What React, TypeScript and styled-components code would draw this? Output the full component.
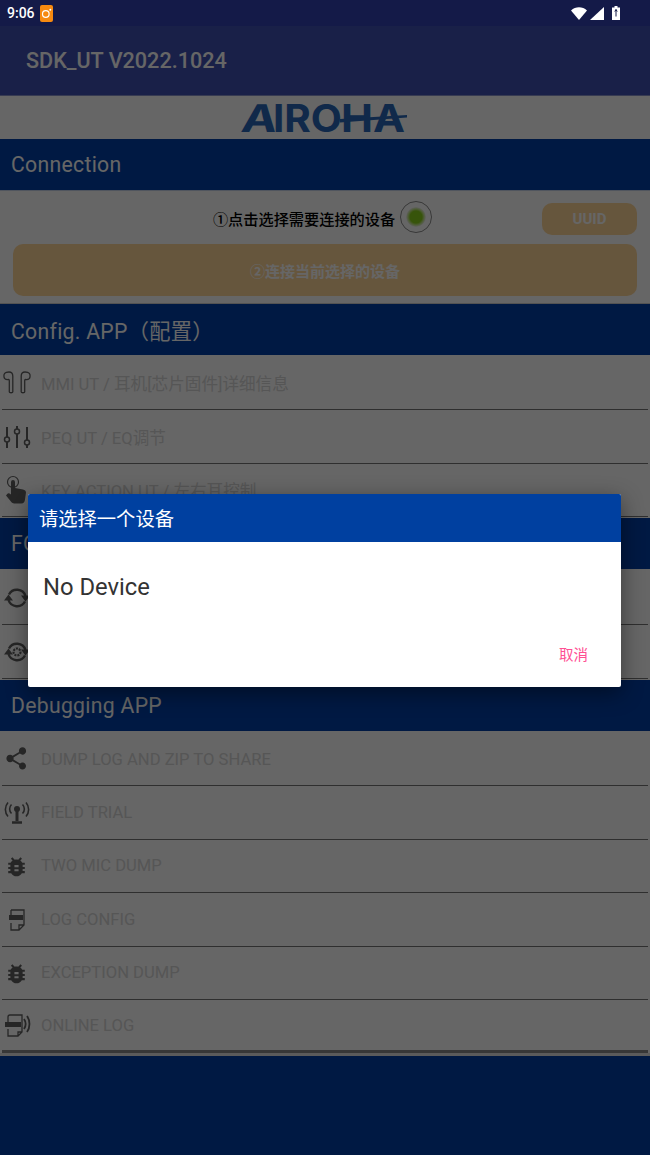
import React from "react"
import styled, { createGlobalStyle } from "styled-components"

const GlobalStyle = createGlobalStyle`
	html, body {
		margin: 0;
		padding: 0;
		background: #00194a;
	}

	* {
		box-sizing: border-box;
	}
`

const FONT = `Roboto, "Noto Sans CJK SC", sans-serif`

const Screen = styled.div`
	position: relative;
	width: 650px;
	height: 1155px;
	overflow: hidden;

	display: flex;
	flex-direction: column;

	background: #0040a8;
	font-family: ${FONT};
`

const StatusBar = styled.div`
	position: relative;
	z-index: 2;
	height: 26px;
	flex: none;

	display: flex;
	align-items: center;
	padding: 0 30px 0 7px;

	background: #141a48;
	color: #fff;
	font-size: 14px;
	font-weight: 500;
`

const StatusTime = styled.span`
	margin-right: 5px;
`

const NotificationBadge = styled.span`
	width: 13px;
	height: 17px;
	border-radius: 2px;
	background: #f68a10;

	display: flex;
	align-items: center;
	justify-content: center;
`

const StatusIcons = styled.div`
	margin-left: auto;
	display: flex;
	align-items: center;
	gap: 3px;
`

const BatteryIcon = styled.svg`
	margin-left: 5px;
`

const AppBar = styled.header`
	height: 70px;
	flex: none;

	display: flex;
	align-items: center;
	padding: 0 26px;

	background: #3f51b5;
	border-bottom: 1px solid #8a93cc;
	color: #fff;
	font-size: 21.6px;
	font-weight: 500;
`

const LogoBar = styled.div`
	height: 43px;
	flex: none;

	display: flex;
	align-items: center;
	justify-content: center;

	background: #fff;
`

const SectionTitle = styled.h2`
	height: 51px;
	flex: none;
	margin: 0;
	padding: 0 0 0 11px;

	display: flex;
	align-items: center;

	background: #0040a8;
	color: #fff;
	font-size: 21.2px;
	font-weight: 400;
	letter-spacing: 0.3px;
`

const ConnectionPanel = styled.section`
	height: 114px;
	flex: none;
	padding: 11px 13px 0;

	display: flex;
	flex-direction: column;
	gap: 10px;

	background: #fff;
	border-top: 1px solid #c8d4ec;
	border-bottom: 1px solid #d0d0d0;
`

const SelectRow = styled.div`
	height: 32px;

	display: grid;
	grid-template-columns: 1fr auto 1fr;
	align-items: center;
`

const SelectGroup = styled.div`
	grid-column: 2;

	display: flex;
	align-items: center;
	gap: 5px;
	margin: -1px 0 0 -5px;

	color: #000;
	font-size: 15.2px;
	font-weight: 500;
`

const Radio = styled.span`
	width: 32px;
	height: 32px;
	margin-bottom: 2px;
	border-radius: 50%;
	border: 1.5px solid #8c8c8c;

	display: flex;
	align-items: center;
	justify-content: center;
`

const RadioDot = styled.span`
	width: 20px;
	height: 20px;
	border-radius: 50%;
	background: radial-gradient(circle, #8bd21c 0 6px, #c4e68c 8px, #f4f4f4 10px);
`

const ActionButton = styled.button<{ $small?: boolean }>`
	display: block;
	border: 0;
	padding: 0;

	width: ${p => (p.$small ? "95px" : "100%")};
	height: ${p => (p.$small ? "32px" : "52px")};
	justify-self: end;

	border-radius: 10px;
	background: #ffd79a;
	color: #fff;
	font-family: ${FONT};
	font-size: 15px;
	font-weight: 700;
`

const RowList = styled.div<{ $height: number; $top?: number }>`
	height: ${p => p.$height}px;
	flex: none;
	padding: ${p => p.$top ?? 2}px 2px 0;
	background: #fff;
`

const Row = styled.div`
	height: 53.4px;

	display: flex;
	align-items: center;
	gap: 9px;

	border-bottom: 1px solid #777;
	color: #d6d6d6;
	font-size: 16.6px;
	font-weight: 400;
`

const LastRowList = styled(RowList)`
	border-bottom: 3px solid #e4e4e4;

	${Row}:last-child {
		border-bottom: 3px solid #8a8a8a;
	}
`

const RowIcon = styled.svg`
	width: 30px;
	height: 30px;
	flex: none;
	color: #606060;
`

const Scrim = styled.div`
	position: absolute;
	inset: 0;
	z-index: 1;
	padding-top: 26px;

	display: flex;
	align-items: center;
	justify-content: center;

	background: rgba(0, 0, 0, 0.6);
`

const Dialog = styled.div`
	width: 593px;
	height: 193px;
	margin-right: 1px;
	border-radius: 2px;
	overflow: hidden;

	display: flex;
	flex-direction: column;

	background: #fff;
	box-shadow: 0 6px 22px rgba(0, 0, 0, 0.45);
`

const DialogTitle = styled.div`
	height: 48px;
	flex: none;
	padding: 0 11px;

	display: flex;
	align-items: center;

	background: #0040a0;
	color: #fff;
	font-size: 19.3px;
`

const DialogBody = styled.div`
	flex: 1;
	padding: 31px 15px 0;
	color: #333;
	font-size: 23.8px;
`

const DialogFooter = styled.div`
	height: 68px;
	flex: none;
	padding: 0 33px 0 0;

	display: flex;
	justify-content: flex-end;
	align-items: center;
`

const CancelButton = styled.button`
	border: 0;
	padding: 0;
	background: none;
	color: #ff4f93;
	font-family: ${FONT};
	font-size: 14.5px;
`

const Logo = () => (
	<svg width="176" height="43" viewBox="0 0 176 43" aria-label="AIROHA">
		<g fill="#2a68b8" fontFamily="Inter, sans-serif" fontSize="38" fontWeight="700">
			<text x="3" y="35.500" textLength="36" lengthAdjust="spacingAndGlyphs" transform="skewX(-8) translate(5 0)">
				A
			</text>
			<text x="36" y="35.500" textLength="69" lengthAdjust="spacingAndGlyphs">
				IRO
			</text>
			<text x="104" y="35.500" textLength="64" lengthAdjust="spacingAndGlyphs">
				HA
			</text>
			<path d="M103 23 L170 19 L170 21.500 L103 26.500z" />
		</g>
	</svg>
)

const syncArcs = (
	<g>
		<path
			fill="none"
			stroke="currentColor"
			strokeWidth="2.400"
			d="M7 11.500A9 9 0 0 1 23.500 13M23 18.500A9 9 0 0 1 6.500 17"
		/>
		<path fill="currentColor" d="M19 12.500h9l-4.500 6zM2 17.500h9l-4.500-6z" />
	</g>
)

const bugPath =
	"M26 10.500h-4c-.7-1.200-1.600-2.200-2.700-3l2.300-2.300-2-2-3.100 3.100c-.8-.2-1.600-.3-2.400-.3s-1.600.1-2.300.3L8.600 3.200l-2 2 2.300 2.300c-1.100.8-2 1.800-2.700 3H3v2.800h3c-.1.500-.1.900-.1 1.400v1.400H3v2.800h2.900v1.400c0 .5 0 .9.1 1.400H3v2.800h4c1.500 2.500 4.200 4.200 7.200 4.200s5.700-1.700 7.200-4.200h4v-2.800h-3c.1-.5.1-.9.100-1.400v-1.400h2.900v-2.800h-2.900v-1.400c0-.5 0-.9-.1-1.400h3v-2.800zM17 22h-5.600v-2.800H17V22zm0-5.600h-5.600v-2.800H17v2.800z"

const icons: Record<string, React.ReactNode> = {
	earbuds: (
		<g fill="none" stroke="currentColor" strokeWidth="1.300">
			<path d="M7 4c-4.500 0-5.500 2-5 5 .4 2.500 2.500 2.800 4.500 2.500.5 0 .8.300.8 1V24c0 1 3.500 1 3.500 0V8c0-2.500-1.300-4-3.800-4z" />
			<path d="M23 4c4.500 0 5.500 2 5 5-.4 2.500-2.500 2.800-4.500 2.500-.5 0-.8.300-.8 1V24c0 1-3.500 1-3.500 0V8c0-2.500 1.300-4 3.800-4z" />
		</g>
	),
	sliders: (
		<g fill="none" stroke="currentColor" strokeWidth="2">
			<path d="M5 5v10M5 20v6M15 4v3M15 12v14M25 5v13M25 23v3" />
			<circle cx="5" cy="17.500" r="2.500" strokeWidth="1.500" />
			<circle cx="15" cy="9.500" r="2.500" strokeWidth="1.500" />
			<circle cx="25" cy="20.500" r="2.500" strokeWidth="1.500" />
		</g>
	),
	touch: (
		<g>
			<circle cx="11" cy="7" r="5.500" fill="none" stroke="currentColor" strokeWidth="1.200" />
			<path
				fill="currentColor"
				d="M9 7a2 2 0 0 1 4 0v6l8 1.500c1.800.4 3 1.500 3 3l-1 7c-.3 2.500-1.500 4-3.500 4H12c-1 0-1.800-.5-2.500-1.200L4 20.500l1.200-1.500c.7-.7 1.500-.8 2.300-.4l1.500.9z"
			/>
		</g>
	),
	sync: syncArcs,
	syncGear: (
		<g>
			{syncArcs}
			<circle cx="15" cy="15" r="3.500" fill="none" stroke="currentColor" strokeWidth="2.200" strokeDasharray="2 1" />
		</g>
	),
	share: (
		<path
			fill="currentColor"
			d="M22.500 20c-1.200 0-2.300.5-3.100 1.200l-8.200-4.800c.1-.4.200-.9.200-1.400s-.1-1-.2-1.400l8.100-4.700c.8.800 2 1.300 3.200 1.300 2.600 0 4.500-2 4.500-4.600S25.100 1 22.500 1 18 3 18 5.600c0 .5.100 1 .2 1.400l-8.100 4.700c-.8-.8-2-1.300-3.200-1.300C4.300 10.400 2.400 12.400 2.400 15s1.900 4.600 4.500 4.600c1.200 0 2.400-.5 3.200-1.300l8.200 4.800c-.1.400-.2.800-.2 1.300 0 2.400 2 4.400 4.400 4.400s4.400-2 4.400-4.400-2-4.400-4.400-4.400z"
			transform="translate(2.500 2.500) scale(.8)"
		/>
	),
	antenna: (
		<g fill="none" stroke="currentColor" strokeWidth="1.600">
			<circle cx="15" cy="11" r="3" fill="currentColor" stroke="none" />
			<path d="M15 13v10" strokeWidth="3" />
			<path d="M10 24.500h10" strokeWidth="2.500" />
			<path d="M9.500 6.500c-2.500 2.600-2.500 6.500 0 9M20.500 6.500c2.500 2.600 2.500 6.500 0 9M6 4.500c-3.500 4-3.500 10 0 14M24 4.500c3.500 4 3.500 10 0 14" />
		</g>
	),
	bug: <path fill="currentColor" d={bugPath} transform="translate(4 4) scale(.74)" />,
	logFile: (
		<g fill="none" stroke="currentColor" strokeWidth="1.300">
			<path d="M9 6h13v15l-5 5H9v-7M9 11V6M22 21h-5v5" />
			<rect x="7" y="11" width="14" height="5" fill="currentColor" stroke="none" />
		</g>
	),
	onlineLog: (
		<g fill="none" stroke="currentColor" strokeWidth="1.300">
			<path d="M6 7c0-1.500 1-2 2-2h12v17l-4 4H6v-7M6 13V7M20 22h-4v4" />
			<rect x="3" y="12" width="16" height="5" fill="currentColor" stroke="none" />
			<path d="M22 9c2 3 2 7 0 10" strokeWidth="1.800" />
			<path d="M25 6c3.300 4.500 3.300 11.500 0 16" strokeWidth="1.800" />
		</g>
	),
}

const ListRow = (props: { icon: string; label?: string }) => (
	<Row>
		<RowIcon viewBox="0 0 30 30">{icons[props.icon]}</RowIcon>
		{props.label}
	</Row>
)

export default function App() {
	return (
		<>
			<GlobalStyle />
			<Screen>
				<StatusBar>
					<StatusTime>9:06</StatusTime>
					<NotificationBadge>
						<svg width="11" height="11" viewBox="0 0 11 11">
							<circle cx="4.800" cy="6" r="3.300" fill="none" stroke="#fff" strokeWidth="1.200" />
							<circle cx="9.300" cy="1.800" r="1" fill="#fff" />
						</svg>
					</NotificationBadge>
					<StatusIcons>
						<svg width="16" height="13" viewBox="0 0 16 13">
							<path d="M0 3.500C4.500-.8 11.500-.8 16 3.500L8 13z" fill="#fff" />
						</svg>
						<svg width="14" height="13" viewBox="0 0 14 13">
							<path d="M14 0v13H0z" fill="#fff" />
						</svg>
						<BatteryIcon width="8" height="14" viewBox="0 0 8 14">
							<path d="M2.500 0h3v1.500H8V14H0V1.500h2.500z" fill="#fff" />
							<path d="M4 3.500v7M2.800 5.500 4 3.500l1.200 2" stroke="#141a48" strokeWidth="1" fill="none" />
						</BatteryIcon>
					</StatusIcons>
				</StatusBar>
				<AppBar>SDK_UT V2022.1024</AppBar>
				<LogoBar>
					<Logo />
				</LogoBar>
				<SectionTitle>Connection</SectionTitle>
				<ConnectionPanel>
					<SelectRow>
						<SelectGroup>
							①点击选择需要连接的设备
							<Radio>
								<RadioDot />
							</Radio>
						</SelectGroup>
						<ActionButton $small>UUID</ActionButton>
					</SelectRow>
					<ActionButton>②连接当前选择的设备</ActionButton>
				</ConnectionPanel>
				<SectionTitle>Config. APP（配置）</SectionTitle>
				<RowList $height={163}>
					<ListRow icon="earbuds" label="MMI UT / 耳机[芯片固件]详细信息" />
					<ListRow icon="sliders" label="PEQ UT / EQ调节" />
					<ListRow icon="touch" label="KEY ACTION UT / 左右耳控制" />
				</RowList>
				<SectionTitle>FOTA</SectionTitle>
				<RowList $height={111} $top={3}>
					<ListRow icon="sync" />
					<ListRow icon="syncGear" />
				</RowList>
				<SectionTitle>Debugging APP</SectionTitle>
				<LastRowList $height={325}>
					<ListRow icon="share" label="DUMP LOG AND ZIP TO SHARE" />
					<ListRow icon="antenna" label="FIELD TRIAL" />
					<ListRow icon="bug" label="TWO MIC DUMP" />
					<ListRow icon="logFile" label="LOG CONFIG" />
					<ListRow icon="bug" label="EXCEPTION DUMP" />
					<ListRow icon="onlineLog" label="ONLINE LOG" />
				</LastRowList>
				<Scrim>
					<Dialog>
						<DialogTitle>请选择一个设备</DialogTitle>
						<DialogBody>No Device</DialogBody>
						<DialogFooter>
							<CancelButton>取消</CancelButton>
						</DialogFooter>
					</Dialog>
				</Scrim>
			</Screen>
		</>
	)
}
